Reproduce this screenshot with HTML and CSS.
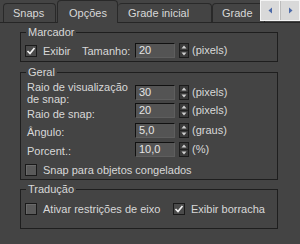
FILE: index.html
```html
<html>

<head>
  <link rel="stylesheet" href="styles.css">
</head>

<body>
  <div class="tabbar">
    <div class="tab tab-snaps">Snaps</div>
    <div class="tab active">Opções</div>
    <div class="tab tab-wide">Grade inicial</div>
    <div class="tab">Grade</div>
    <div class="scroller">
      <span class="scroll-btn">
        <svg width="5" height="7" viewBox="0 0 5 7"><path d="M4 0.5 L0.5 3.5 L4 6.5 Z" fill="#4d6aa8" /></svg>
      </span>
      <span class="scroll-btn">
        <svg width="5" height="7" viewBox="0 0 5 7"><path d="M1 0.5 L4.5 3.5 L1 6.5 Z" fill="#4d6aa8" /></svg>
      </span>
    </div>
  </div>

  <fieldset class="group group-marker">
    <legend>Marcador</legend>
    <div class="row">
      <label class="check check-show">
        <span class="box checked">
          <svg width="10" height="10" viewBox="0 0 10 10"><path d="M1.5 5 L4 7.5 L8.5 2" fill="none" stroke="#f2f2f2" stroke-width="1.7" /></svg>
        </span>
        Exibir
      </label>
      <span class="lbl lbl-short">Tamanho:</span>
      <span class="field">20</span>
      <span class="spin">
        <svg width="10" height="15" viewBox="0 0 10 15"><rect x="0.5" y="0.5" width="9" height="14" fill="#3a3a3a" stroke="#1c1c1c" /><line x1="1" y1="7.5" x2="9" y2="7.5" stroke="#222" /><path d="M2.5 5.5 L5 2.5 L7.5 5.5 Z" fill="#d0d0d0" /><path d="M2.5 9.5 L5 12.5 L7.5 9.5 Z" fill="#d0d0d0" /></svg>
      </span>
      <span class="unit">(pixels)</span>
    </div>
  </fieldset>

  <fieldset class="group group-general">
    <legend>Geral</legend>
    <div class="row row-a">
      <span class="lbl">Raio de visualização<br>de snap:</span>
      <span class="field">30</span>
      <span class="spin">
        <svg width="10" height="15" viewBox="0 0 10 15"><rect x="0.5" y="0.5" width="9" height="14" fill="#3a3a3a" stroke="#1c1c1c" /><line x1="1" y1="7.5" x2="9" y2="7.5" stroke="#222" /><path d="M2.5 5.5 L5 2.5 L7.5 5.5 Z" fill="#d0d0d0" /><path d="M2.5 9.5 L5 12.5 L7.5 9.5 Z" fill="#d0d0d0" /></svg>
      </span>
      <span class="unit">(pixels)</span>
    </div>
    <div class="row row-b">
      <span class="lbl">Raio de snap:</span>
      <span class="field">20</span>
      <span class="spin">
        <svg width="10" height="15" viewBox="0 0 10 15"><rect x="0.5" y="0.5" width="9" height="14" fill="#3a3a3a" stroke="#1c1c1c" /><line x1="1" y1="7.5" x2="9" y2="7.5" stroke="#222" /><path d="M2.5 5.5 L5 2.5 L7.5 5.5 Z" fill="#d0d0d0" /><path d="M2.5 9.5 L5 12.5 L7.5 9.5 Z" fill="#d0d0d0" /></svg>
      </span>
      <span class="unit">(pixels)</span>
    </div>
    <div class="row row-c">
      <span class="lbl">Ângulo:</span>
      <span class="field">5,0</span>
      <span class="spin">
        <svg width="10" height="15" viewBox="0 0 10 15"><rect x="0.5" y="0.5" width="9" height="14" fill="#3a3a3a" stroke="#1c1c1c" /><line x1="1" y1="7.5" x2="9" y2="7.5" stroke="#222" /><path d="M2.5 5.5 L5 2.5 L7.5 5.5 Z" fill="#d0d0d0" /><path d="M2.5 9.5 L5 12.5 L7.5 9.5 Z" fill="#d0d0d0" /></svg>
      </span>
      <span class="unit">(graus)</span>
    </div>
    <div class="row row-d">
      <span class="lbl">Porcent.:</span>
      <span class="field">10,0</span>
      <span class="spin">
        <svg width="10" height="15" viewBox="0 0 10 15"><rect x="0.5" y="0.5" width="9" height="14" fill="#3a3a3a" stroke="#1c1c1c" /><line x1="1" y1="7.5" x2="9" y2="7.5" stroke="#222" /><path d="M2.5 5.5 L5 2.5 L7.5 5.5 Z" fill="#d0d0d0" /><path d="M2.5 9.5 L5 12.5 L7.5 9.5 Z" fill="#d0d0d0" /></svg>
      </span>
      <span class="unit">(%)</span>
    </div>
    <div class="row row-e">
      <label class="check">
        <span class="box"></span>
        Snap para objetos congelados
      </label>
    </div>
  </fieldset>

  <fieldset class="group group-translate">
    <legend>Tradução</legend>
    <div class="row">
      <label class="check check-axis">
        <span class="box"></span>
        Ativar restrições de eixo
      </label>
      <label class="check">
        <span class="box checked">
          <svg width="10" height="10" viewBox="0 0 10 10"><path d="M1.5 5 L4 7.5 L8.5 2" fill="none" stroke="#f2f2f2" stroke-width="1.7" /></svg>
        </span>
        Exibir borracha
      </label>
    </div>
  </fieldset>
</body>

</html>
```

FILE: styles.css
```css
* {
  box-sizing: border-box;
}

body {
  margin: 0;
  width: 300px;
  height: 244px;
  overflow: hidden;
  background: #444444;
  color: #d8d8d8;
  font-family: 'Liberation Sans', Arial, sans-serif;
  font-size: 11px;
  line-height: 12px;
}

/* tab strip */

.tabbar {
  position: relative;
  display: flex;
  align-items: flex-end;
  height: 23px;
  padding-left: 3px;
  border-bottom: 1px solid #262626;
}

.tab {
  height: 19px;
  padding: 0 11px 0 9px;
  line-height: 18px;
  border: 1px solid #292929;
  border-bottom: none;
  border-radius: 4px 4px 0 0;
  white-space: nowrap;
}

.tab-snaps {
  width: 53px;
}

.tab.active {
  width: 61px;
  height: 23px;
  margin: 0 0 -1px 1px;
  padding: 3px 0 0 11px;
  background: #444444;
}

.tab-wide {
  width: 94px;
  padding-left: 10px;
  border-left: none;
}

.scroller {
  position: absolute;
  top: 0;
  right: 0;
  display: flex;
  width: 40px;
  height: 21px;
  border: 1px solid #f4f4f4;
  background: #f4f4f4;
  gap: 1px;
}

.scroll-btn {
  display: flex;
  flex: 1;
  align-items: center;
  justify-content: center;
  background: #d9d9d9;
  border-left: 1px solid #bcbcbc;
}

.scroll-btn:first-child {
  border-left: none;
}

/* group boxes */

.group {
  margin: 0 22px 0 20px;
  padding: 0 0 0 4px;
  border: 1px solid #1e1e1e;
  min-width: 0;
}

.group legend {
  margin-left: 1px;
  padding: 0 2px;
  line-height: 12px;
}

.group-marker {
  margin-top: 3px;
  padding-bottom: 3px;
}

.group-marker .row {
  margin-top: 5px;
  height: 15px;
  align-items: center;
}

.group-general {
  margin-top: 4px;
  padding-top: 7px;
}

.group-translate {
  margin-top: 3px;
  padding-bottom: 12px;
}

.group-translate .row {
  margin-top: 7px;
  height: 14px;
  align-items: center;
}

.row {
  display: flex;
  align-items: flex-start;
}

.row-a { height: 18px; }
.row-b { height: 20px; }
.row-c { height: 19px; }
.row-d { height: 20px; }
.row-e { height: 17px; padding-top: 2px; }

.row-a .lbl { margin-top: -4px; }
.row-b .lbl { padding-top: 5px; }
.row-c .lbl { padding-top: 3px; }
.row-d .lbl { padding-top: 3px; }

.lbl {
  flex: none;
  width: 110px;
  padding-left: 2px;
  white-space: nowrap;
}

.lbl-short {
  width: 53px;
  padding-left: 0;
}

.field {
  flex: none;
  width: 40px;
  height: 15px;
  padding-left: 3px;
  line-height: 13px;
  color: #e4e4e4;
  background: #545454;
  border: 1px solid;
  border-color: #111111 #5e5e5e #5e5e5e #111111;
}

.spin {
  flex: none;
  display: flex;
  margin-left: 4px;
}

.unit {
  margin-left: 3px;
  line-height: 15px;
  white-space: nowrap;
}

/* check boxes */

.check {
  display: flex;
  align-items: center;
  white-space: nowrap;
}

.check-show {
  width: 57px;
}

.check-axis {
  width: 148px;
}

.box {
  flex: none;
  display: flex;
  align-items: center;
  justify-content: center;
  width: 12px;
  height: 12px;
  margin-right: 6px;
  background: #5a5a5a;
  border: 1px solid #1a1a1a;
  box-shadow: inset 1px 1px 0 #6a6a6a;
}

.box.checked {
  background: #4a4a4a;
  box-shadow: none;
}
```
